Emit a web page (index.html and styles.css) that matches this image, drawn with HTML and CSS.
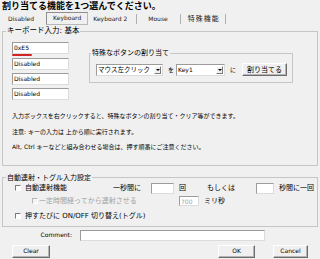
FILE: index.html
```html
<!DOCTYPE html>
<html lang="ja">
<head>
  <meta charset="UTF-8" />
  <title>割り当て</title>
  <link rel="stylesheet" href="styles.css">
</head>
<body>
  <div class="title">割り当てる機能を1つ選んでください。</div>

  <div class="tabs">
    <span class="tab first">Disabled</span>
    <span class="tab on">Keyboard</span>
    <span class="tab kb2">Keyboard 2</span>
    <span class="tab mouse">Mouse</span>
    <span class="tab special">特殊機能</span>
  </div>

  <fieldset class="grp main">
    <legend>キーボード入力: 基本</legend>
    <div class="main-body">
      <div class="keyarea">
        <div class="keys">
          <div class="box">0xE5</div>
          <div class="mark"></div>
          <div class="box">Disabled</div>
          <div class="box">Disabled</div>
          <div class="box">Disabled</div>
        </div>

        <fieldset class="grp sub">
          <legend>特殊なボタンの割り当て</legend>
          <div class="sub-row">
            <div class="sel sel-mouse"><span>マウス左クリック</span><i class="drop"></i></div>
            <span class="word wo">を</span>
            <div class="sel sel-key"><span>Key1</span><i class="drop"></i></div>
            <span class="word ni">に</span>
            <button class="btn assign">割り当てる</button>
          </div>
        </fieldset>
      </div>

      <div class="notes">
        <p>入力ボックスを右クリックすると、特殊なボタンの割り当て・クリア等ができます。</p>
        <p>注意: キーの入力は 上から順に実行されます。</p>
        <p>Alt, Ctrl キーなどと組み合わせる場合は、押す順番にご注意ください。</p>
      </div>
    </div>
  </fieldset>

  <fieldset class="grp auto">
    <legend>自動連射・トグル入力設定</legend>
    <div class="auto-body">
      <div class="arow r1">
        <span class="cell c-auto"><i class="chk"></i>自動連射機能</span>
        <span>一秒間に</span>
        <span class="field f-count"></span>
        <span class="unit">回</span>
        <span class="or">もしくは</span>
        <span class="field f-sec"></span>
        <span class="unit">秒間に一回</span>
      </div>
      <div class="arow r2 off">
        <span class="cell c-delay"><i class="chk"></i>一定時間経ってから連射させる</span>
        <span class="field f-ms">700</span>
        <span class="unit dark">ミリ秒</span>
      </div>
      <div class="arow r3">
        <span class="cell"><i class="chk"></i>押すたびに ON/OFF 切り替え(トグル)</span>
      </div>
    </div>
  </fieldset>

  <div class="comment">
    <label for="comment">Comment:</label>
    <input type="text" id="comment" class="comment-in">
  </div>

  <div class="actions">
    <button class="btn clear">Clear</button>
    <button class="btn ok">OK</button>
    <button class="btn cancel">Cancel</button>
  </div>
</body>
</html>
```

FILE: styles.css
```css
html, body {
  margin: 0;
  padding: 0;
}
body {
  width: 320px;
  height: 259px;
  overflow: hidden;
  background-color: #f0f0f0;
  color: #000;
  font-family: "DejaVu Sans", "Noto Sans CJK JP", sans-serif;
  font-size: 6px;
  line-height: 8px;
}
p {
  margin: 0;
}

.title {
  padding: 1px 0 0 2px;
  height: 10px;
  line-height: 10px;
  font-size: 9px;
  font-weight: bold;
}

/* tab strip */
.tabs {
  display: flex;
  align-items: center;
  height: 13px;
  margin-top: 1px;
}
.tab {
  height: 10px;
  line-height: 10px;
  color: #222;
}
.tab.first {
  margin-left: 8px;
}
.tab.on {
  margin-left: 12px;
  height: 11px;
  padding: 0 6px;
  border: 1px solid #a8a8a8;
  border-color: #8e8e8e #b8b8b8 #b8b8b8 #8e8e8e;
}
.tab.kb2 {
  margin-left: 5px;
  padding-right: 9px;
  border-right: 1px solid #b0b0b0;
}
.tab.mouse {
  margin-left: 11px;
  padding-right: 12px;
  border-right: 1px solid #b0b0b0;
}
.tab.special {
  margin-left: 7px;
  padding-right: 5px;
  border-right: 1px solid #b0b0b0;
  font-size: 7px;
  letter-spacing: 1px;
}

/* group boxes */
.grp {
  margin: 0;
  padding: 0;
  min-width: 0;
  border: 1px solid #c6c6c6;
}
.grp legend {
  margin-left: 3px;
  padding: 0 1px;
  font-size: 7px;
  line-height: 8px;
}
.main {
  margin: 2px 2px 0 2px;
}
.main > legend {
  font-size: 7.5px;
}
.main-body {
  padding: 7px 8px 10px 9px;
}
.keyarea {
  display: flex;
  align-items: flex-start;
}
.keys {
  width: 57px;
}
.box {
  height: 10px;
  line-height: 10px;
  padding-left: 1px;
  margin-top: 3px;
  background-color: #fff;
  border: 1px solid;
  border-color: #9c9c9c #dcdcdc #dcdcdc #9c9c9c;
}
.box:first-child {
  margin-top: 0;
}
.mark {
  width: 20px;
  height: 2px;
  margin-bottom: -1px;
  background-color: #d02424;
  border-radius: 1px;
}

.sub {
  width: 204px;
  box-sizing: border-box;
  margin-left: 20px;
  margin-top: 7px;
}
.sub legend {
  margin-left: 1px;
}
.sub-row {
  display: flex;
  align-items: center;
  padding: 6px 0 6px 6px;
}
.sel {
  display: flex;
  align-items: center;
  justify-content: space-between;
  box-sizing: border-box;
  height: 12px;
  padding-left: 1px;
  background-color: #fff;
  border: 1px solid;
  border-color: #9c9c9c #dcdcdc #dcdcdc #9c9c9c;
}
.sel-mouse {
  width: 67px;
  font-size: 6.5px;
}
.sel-key {
  width: 49px;
  margin-left: 2px;
}
.drop {
  position: relative;
  width: 7px;
  height: 8px;
  margin-right: 1px;
  background-color: #f0f0f0;
  border: 1px solid;
  border-color: #fff #7a7a7a #7a7a7a #fff;
  box-sizing: border-box;
}
.drop::after {
  content: "";
  position: absolute;
  left: 1px;
  top: 2px;
  border-left: 2px solid transparent;
  border-right: 2px solid transparent;
  border-top: 2px solid #000;
}
.word.wo {
  margin-left: 5px;
}
.word.ni {
  margin-left: 5px;
}
.btn {
  box-sizing: border-box;
  height: 13px;
  padding: 0;
  font: inherit;
  color: #000;
  background-color: #f0f0f0;
  border: 1px solid;
  border-color: #fff #6c6c6c #6c6c6c #fff;
  box-shadow: inset -1px -1px 0 #b4b4b4;
}
.btn.assign {
  width: 45px;
  margin-left: 6px;
  font-size: 7px;
}

.notes {
  margin-top: 8px;
  line-height: 15.5px;
}

/* auto fire group */
.auto {
  margin: 8px 2px 0 2px;
  font-size: 7px;
}
.auto-body {
  padding: 1px 0 5px 0;
}
.arow {
  display: flex;
  align-items: center;
  height: 10px;
}
.arow.r1 {
  height: 11px;
  margin-bottom: 2px;
}
.arow.r3 {
  margin-top: 5px;
}
.cell {
  display: flex;
  align-items: center;
  margin-left: 12px;
}
.c-auto {
  width: 98px;
}
.c-delay {
  margin-left: 29px;
  width: 147px;
}
.chk {
  width: 6px;
  height: 6px;
  box-sizing: border-box;
  margin-right: 4px;
  background-color: #fff;
  border: 1px solid;
  border-color: #7a7a7a #fff #fff #7a7a7a;
}
.c-delay .chk {
  margin-right: 1px;
}
.off {
  color: #a2a2a2;
}
.off .chk {
  border-color: #b4b4b4 #fff #fff #b4b4b4;
  background-color: #f4f4f4;
}
.field {
  box-sizing: border-box;
  height: 11px;
  line-height: 9px;
  padding-left: 1px;
  background-color: #fff;
  border: 1px solid;
  border-color: #9c9c9c #dcdcdc #dcdcdc #9c9c9c;
  font-size: 6px;
}
.f-count {
  width: 23px;
  margin-left: 10px;
}
.f-sec {
  width: 18px;
  margin-left: 21px;
}
.f-ms {
  width: 20px;
  height: 10px;
  color: #a2a2a2;
}
.unit {
  margin-left: 5px;
}
.unit.dark {
  color: #000;
}
.or {
  margin-left: 21px;
}

/* footer */
.comment {
  display: flex;
  align-items: center;
  margin-top: 3px;
  height: 11px;
}
.comment label {
  width: 72px;
  text-align: right;
}
.comment-in {
  box-sizing: border-box;
  width: 185px;
  height: 11px;
  margin: 0 0 0 8px;
  padding: 0;
  background-color: #fff;
  border: 1px solid;
  border-color: #9c9c9c #dcdcdc #dcdcdc #9c9c9c;
}
.actions {
  display: flex;
  margin-top: 4px;
}
.btn.clear {
  width: 38px;
  margin-left: 12px;
}
.btn.ok {
  width: 37px;
  margin-left: auto;
}
.btn.cancel {
  width: 35px;
  margin-left: 18px;
  margin-right: 12px;
}
```
